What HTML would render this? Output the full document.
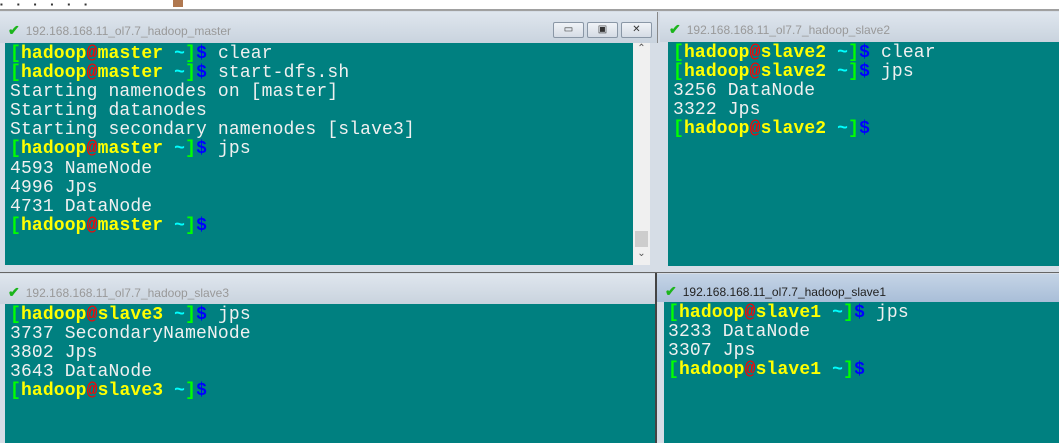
<html><head><style>
body{margin:0;width:1059px;height:443px;background:#d6dde6;position:relative;overflow:hidden;font-family:"Liberation Sans",sans-serif}
.a{position:absolute}
.tb{background:linear-gradient(#dfe6ee,#c9d3de);color:#999;font-size:12px}
.tb.act{background:linear-gradient(#c5d4e6,#a9bed8);color:#222}
.t{position:absolute;background:#008080;font-family:"Liberation Mono",monospace;font-size:18px;line-height:19.1px;color:#f0f0f0;white-space:pre;padding:2px 0 0 5px;box-sizing:border-box;letter-spacing:0.14px}
.p{font-weight:bold}
.g{color:#00ff00}.y{color:#ffff00}.r{color:#ff0000}.c{color:#00ffff}.b{color:#0000ff}
.ck{color:#1cb51c;font-weight:bold;font-size:14px;margin-right:6px}
.btn{position:absolute;top:22px;width:31px;height:16px;border:1px solid #8a97a6;border-radius:2px;background:linear-gradient(#f0f3f7,#d5dce5);box-sizing:border-box;font-size:10px;text-align:center;line-height:13px;color:#333}
</style></head><body>
<div class="a" style="left:0;top:0;width:1059px;height:9px;background:#fff"></div>
<div class="a" style="left:0;top:9px;width:1059px;height:2px;background:#a0a0a0"></div>
<div class="a" style="left:0;top:0;width:200px;height:8px;font-size:8px;color:#333;letter-spacing:14px">▪▪▪▪▪▪</div>
<div class="a" style="left:173px;top:0;width:10px;height:7px;background:#b07850"></div>
<!-- master -->
<div class="a tb" style="left:0;top:12px;width:657px;height:31px;border-right:1px solid #888"><div style="position:absolute;left:8px;top:10px"><span class="ck">✔</span>192.168.168.11_ol7.7_hadoop_master</div></div>
<div class="btn" style="left:553px">▭</div><div class="btn" style="left:587px">▣</div><div class="btn" style="left:621px">✕</div>
<div class="t" style="left:5px;top:43px;width:628px;height:222px"><span class="p"><span class="g">[</span><span class="y">hadoop</span><span class="r">@</span><span class="y">master</span> <span class="c">~</span><span class="g">]</span><span class="b">$</span></span> clear
<span class="p"><span class="g">[</span><span class="y">hadoop</span><span class="r">@</span><span class="y">master</span> <span class="c">~</span><span class="g">]</span><span class="b">$</span></span> start-dfs.sh
Starting namenodes on [master]
Starting datanodes
Starting secondary namenodes [slave3]
<span class="p"><span class="g">[</span><span class="y">hadoop</span><span class="r">@</span><span class="y">master</span> <span class="c">~</span><span class="g">]</span><span class="b">$</span></span> jps
4593 NameNode
4996 Jps
4731 DataNode
<span class="p"><span class="g">[</span><span class="y">hadoop</span><span class="r">@</span><span class="y">master</span> <span class="c">~</span><span class="g">]</span><span class="b">$</span></span></div>
<div class="a" style="left:633px;top:43px;width:17px;height:222px;background:#f0f0f0;font-size:10px;color:#555;text-align:center">⌃<div style="position:absolute;left:2px;top:188px;width:13px;height:16px;background:#cdcdcd"></div><div style="position:absolute;left:0;top:205px;width:17px">⌄</div></div>
<!-- slave2 -->
<div class="a tb" style="left:660px;top:12px;width:399px;height:30px"><div style="position:absolute;left:9px;top:9px"><span class="ck">✔</span>192.168.168.11_ol7.7_hadoop_slave2</div></div>
<div class="t" style="left:668px;top:42px;width:391px;height:224px"><span class="p"><span class="g">[</span><span class="y">hadoop</span><span class="r">@</span><span class="y">slave2</span> <span class="c">~</span><span class="g">]</span><span class="b">$</span></span> clear
<span class="p"><span class="g">[</span><span class="y">hadoop</span><span class="r">@</span><span class="y">slave2</span> <span class="c">~</span><span class="g">]</span><span class="b">$</span></span> jps
3256 DataNode
3322 Jps
<span class="p"><span class="g">[</span><span class="y">hadoop</span><span class="r">@</span><span class="y">slave2</span> <span class="c">~</span><span class="g">]</span><span class="b">$</span></span></div>
<div class="a" style="left:0;top:272px;width:1059px;height:1px;background:#666"></div>
<!-- slave3 -->
<div class="a tb" style="left:0;top:274px;width:655px;height:30px"><div style="position:absolute;left:8px;top:10px"><span class="ck">✔</span>192.168.168.11_ol7.7_hadoop_slave3</div></div>
<div class="t" style="left:5px;top:304px;width:650px;height:139px"><span class="p"><span class="g">[</span><span class="y">hadoop</span><span class="r">@</span><span class="y">slave3</span> <span class="c">~</span><span class="g">]</span><span class="b">$</span></span> jps
3737 SecondaryNameNode
3802 Jps
3643 DataNode
<span class="p"><span class="g">[</span><span class="y">hadoop</span><span class="r">@</span><span class="y">slave3</span> <span class="c">~</span><span class="g">]</span><span class="b">$</span></span></div>
<!-- slave1 -->
<div class="a" style="left:655px;top:273px;width:2px;height:170px;background:#444"></div>
<div class="a tb act" style="left:657px;top:274px;width:402px;height:28px"><div style="position:absolute;left:8px;top:9px"><span class="ck">✔</span>192.168.168.11_ol7.7_hadoop_slave1</div></div>
<div class="t" style="left:664px;top:302px;width:395px;height:141px;padding-left:4px"><span class="p"><span class="g">[</span><span class="y">hadoop</span><span class="r">@</span><span class="y">slave1</span> <span class="c">~</span><span class="g">]</span><span class="b">$</span></span> jps
3233 DataNode
3307 Jps
<span class="p"><span class="g">[</span><span class="y">hadoop</span><span class="r">@</span><span class="y">slave1</span> <span class="c">~</span><span class="g">]</span><span class="b">$</span></span></div>
</body></html>
